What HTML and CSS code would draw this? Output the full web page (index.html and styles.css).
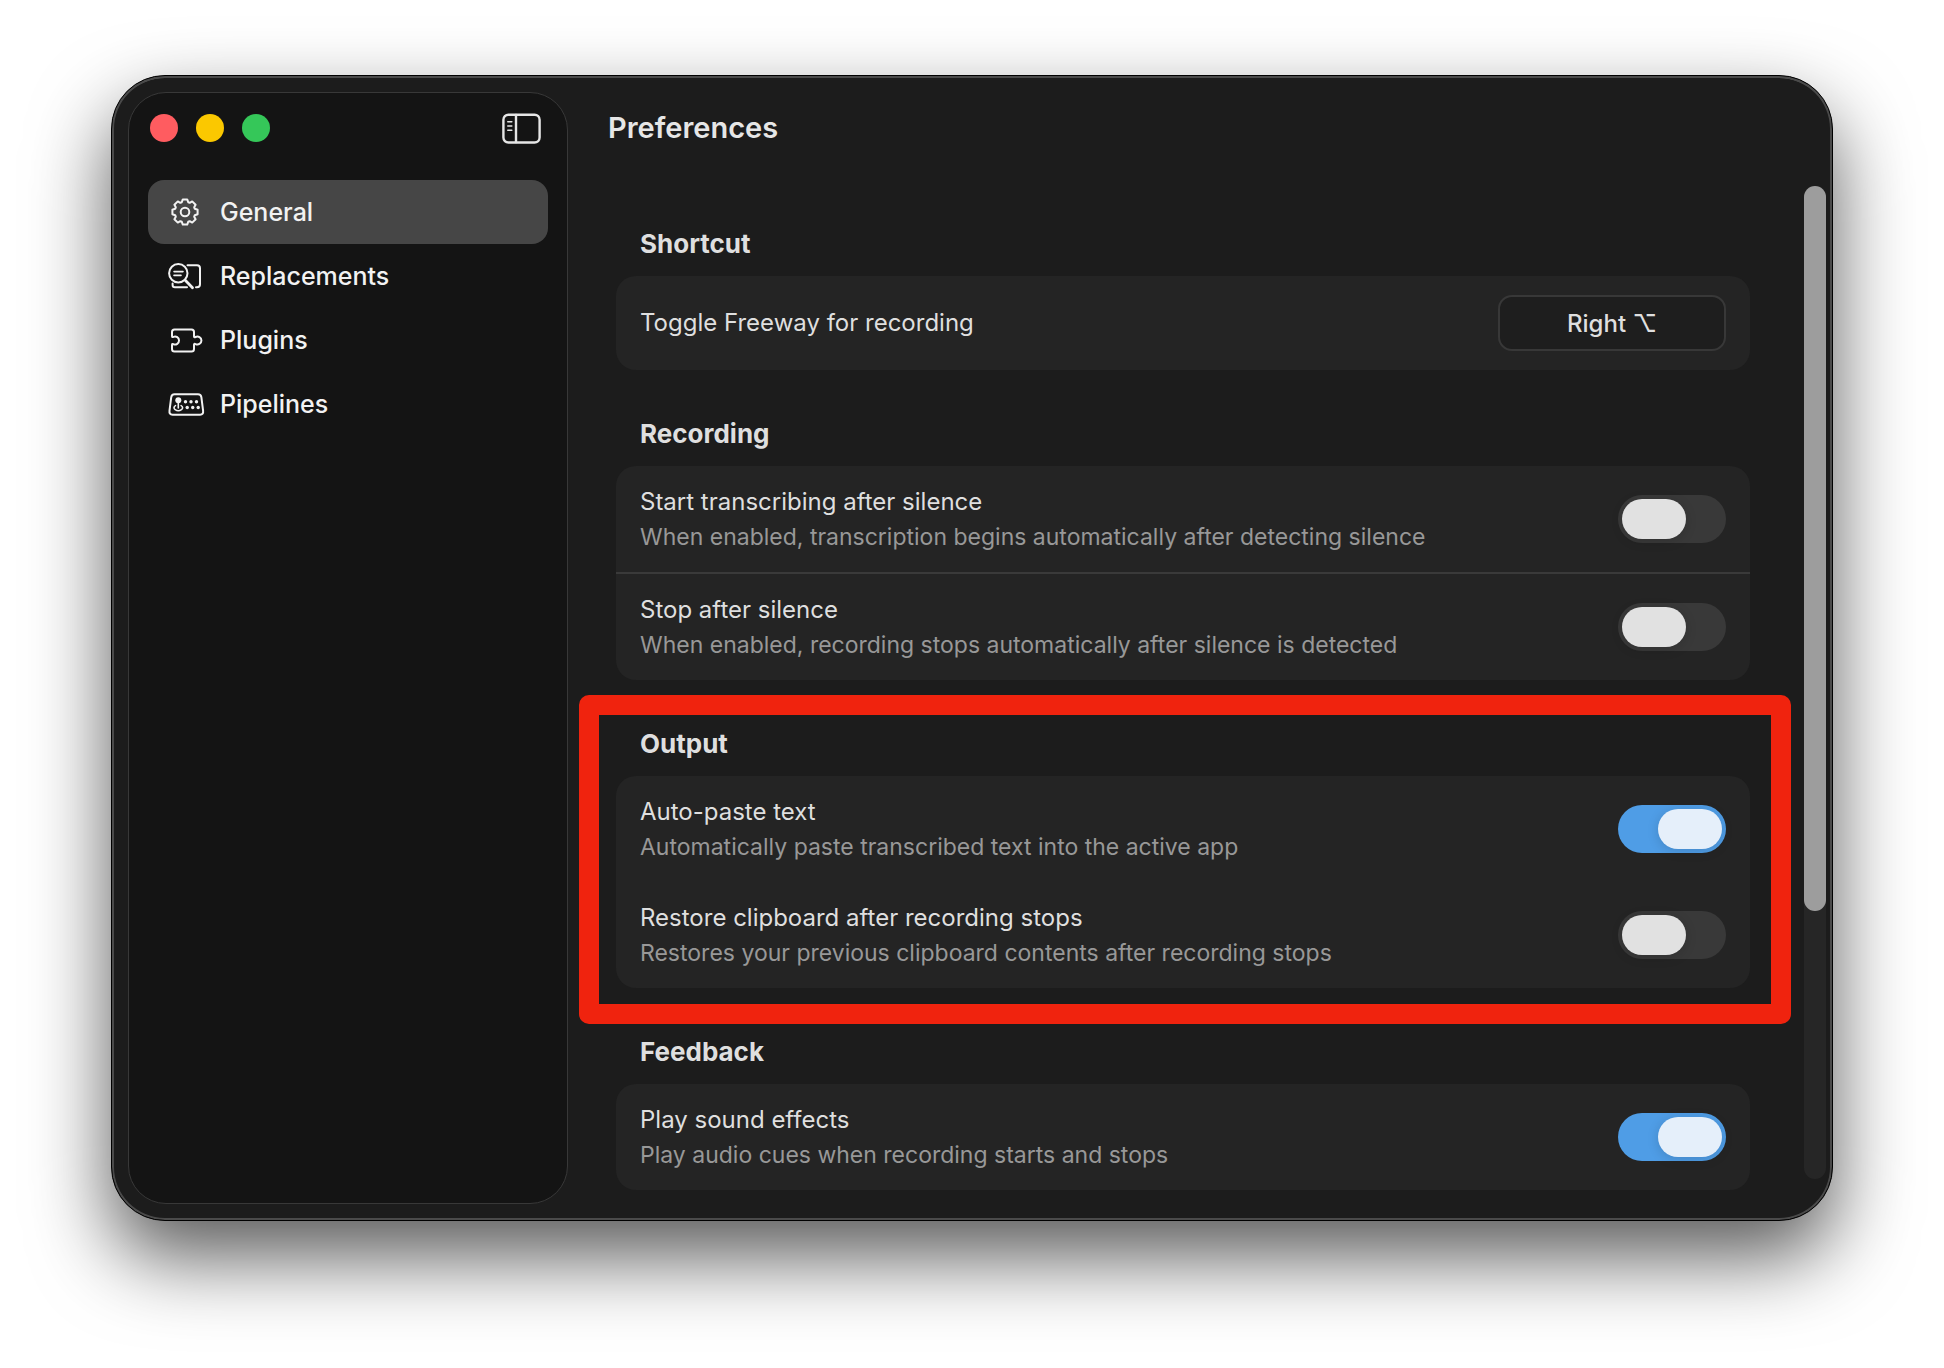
FILE: index.html
```html
<!DOCTYPE html>
<html lang="en">
<head>
    <meta charset="UTF-8">
    <meta name="viewport" content="width=device-width, initial-scale=1.0">
    <title>Preferences</title>
    <link rel="stylesheet" href="styles.css">
</head>
<body>
    <div class="window">
        <aside class="sidebar">
            <div class="sidebar-header">
                <div class="lights">
                    <button class="light close" aria-label="Close"></button>
                    <button class="light minimize" aria-label="Minimize"></button>
                    <button class="light zoom" aria-label="Zoom"></button>
                </div>
                <button class="sidebar-toggle" aria-label="Toggle sidebar">
                    <svg width="39" height="31" viewBox="0 0 39 31" fill="none" stroke="currentColor" stroke-width="2.4" stroke-linecap="round">
                        <rect x="1.4" y="1.7" width="36.2" height="27.8" rx="5"/>
                        <path d="M14 2v27"/>
                        <path d="M5.8 8.7h4M5.8 13h4M5.8 17.3h4" stroke-width="1.6"/>
                    </svg>
                </button>
            </div>
            <nav class="nav">
                <a class="nav-item active" href="#general">
                    <svg class="icon" viewBox="-20 -16 40 32">
                        <path d="M-2.2-12.6H2.2L3.2-9.8 4.7-9.2 7.2-10.6 10.6-7.2 9.2-4.7 9.8-3.2 12.6-2.2V2.2L9.8 3.2 9.2 4.7 10.6 7.2 7.2 10.6 4.7 9.2 3.2 9.8 2.2 12.6H-2.2L-3.2 9.8-4.7 9.2-7.2 10.6-10.6 7.2-9.2 4.7-9.8 3.2-12.6 2.2V-2.2L-9.8-3.2-9.2-4.7-10.6-7.2-7.2-10.6-4.7-9.2-3.2-9.8z"/>
                        <circle r="4.3"/>
                    </svg>
                    General
                </a>
                <a class="nav-item" href="#replacements">
                    <svg class="icon" viewBox="0 0 40 32">
                        <circle cx="13.3" cy="13.3" r="9.2"/>
                        <path d="M20.5 20.5l7 7.2" stroke-width="2.8"/>
                        <path d="M9 11.6h9M9 15.4h7" stroke-width="1.6"/>
                        <path d="M22.5 5.3H32q3 0 3 3v16q0 3-3 3h-1M7.6 23.5V25q0 2.3 2.3 2.3H22"/>
                    </svg>
                    Replacements
                </a>
                <a class="nav-item" href="#plugins">
                    <svg class="icon" viewBox="0 0 40 32">
                        <path d="M7 12V8q0-2.5 2.5-2.5h17Q29 5.5 29 8v4.2q0 1.6 1.5.8a4 4 0 1 1 0 7q-1.5-.8-1.5.8V25q0 2.5-2.5 2.5h-17Q7 27.5 7 25v-4q0-1.6 1.5-.8a4 4 0 1 0 0-7.4Q7 13.6 7 12z"/>
                    </svg>
                    Plugins
                </a>
                <a class="nav-item" href="#pipelines">
                    <svg class="icon" viewBox="0 0 40 32">
                        <path d="M9.5 6.3H33q3 0 3.4 3l1.7 13.4q.5 4-3 4H7.5q-3.5 0-3-4L6.2 9.3q.4-3 3.3-3z"/>
                        <path d="M10.5 17.6a4.3 2.8 0 1 0 5.6 0M13.3 13v7" stroke-width="1.6"/>
                        <g class="dots">
                            <circle cx="13.3" cy="12.3" r="3"/>
                            <circle cx="20.5" cy="13.7" r="1.7"/>
                            <circle cx="26" cy="13.7" r="1.7"/>
                            <circle cx="31.5" cy="13.7" r="1.7"/>
                            <circle cx="22.2" cy="19.5" r="1.7"/>
                            <circle cx="27.7" cy="19.5" r="1.7"/>
                            <circle cx="33.2" cy="19.5" r="1.7"/>
                        </g>
                    </svg>
                    Pipelines
                </a>
            </nav>
        </aside>

        <main class="main">
            <h1>Preferences</h1>
            <div class="body">
                <div class="content">
                    <section class="section">
                        <h2>Shortcut</h2>
                        <div class="card">
                            <div class="row shortcut-row">
                                <span class="title" id="shortcutLabel">Toggle Freeway for recording</span>
                                <button class="shortcut" aria-describedby="shortcutLabel">Right ⌥</button>
                            </div>
                        </div>
                    </section>

                    <section class="section">
                        <h2>Recording</h2>
                        <div class="card divided">
                            <div class="row">
                                <label class="text" for="startSilence">
                                    <span class="title">Start transcribing after silence</span>
                                    <span class="desc">When enabled, transcription begins automatically after detecting silence</span>
                                </label>
                                <input class="switch" type="checkbox" id="startSilence">
                            </div>
                            <div class="row">
                                <label class="text" for="stopSilence">
                                    <span class="title">Stop after silence</span>
                                    <span class="desc">When enabled, recording stops automatically after silence is detected</span>
                                </label>
                                <input class="switch" type="checkbox" id="stopSilence">
                            </div>
                        </div>
                    </section>

                    <section class="section highlighted">
                        <h2>Output</h2>
                        <div class="card">
                            <div class="row">
                                <label class="text" for="autoPaste">
                                    <span class="title">Auto-paste text</span>
                                    <span class="desc">Automatically paste transcribed text into the active app</span>
                                </label>
                                <input class="switch" type="checkbox" id="autoPaste" checked>
                            </div>
                            <div class="row">
                                <label class="text" for="restoreClipboard">
                                    <span class="title">Restore clipboard after recording stops</span>
                                    <span class="desc">Restores your previous clipboard contents after recording stops</span>
                                </label>
                                <input class="switch" type="checkbox" id="restoreClipboard">
                            </div>
                        </div>
                    </section>

                    <section class="section">
                        <h2>Feedback</h2>
                        <div class="card">
                            <div class="row">
                                <label class="text" for="playSounds">
                                    <span class="title">Play sound effects</span>
                                    <span class="desc">Play audio cues when recording starts and stops</span>
                                </label>
                                <input class="switch" type="checkbox" id="playSounds" checked>
                            </div>
                        </div>
                    </section>
                </div>
                <div class="scrollbar"><div class="thumb"></div></div>
            </div>
        </main>
    </div>
</body>
</html>
```
FILE: styles.css
```css
* {
    box-sizing: border-box;
}
body {
    margin: 0;
    min-height: 100vh;
    padding: 75px 111px 147px;
    display: flex;
    background: #fff;
    color: #dfdfdf;
    font-family: Inter, "Liberation Sans", "DejaVu Sans", sans-serif;
    font-size: 25px;
}
h1, h2 {
    margin: 0;
}
button {
    padding: 0;
    border: none;
    background: none;
    color: inherit;
    font: inherit;
}
.window {
    flex: 1;
    display: flex;
    background: #1c1c1c;
    border: 1px solid #000;
    border-radius: 54px;
    box-shadow: inset 0 0 0 2px #4a4a4a, inset 0 2px 0 #6c6c6c, 0 36px 80px rgba(0, 0, 0, 0.65);
}

/* Sidebar */
.sidebar {
    width: 440px;
    flex: none;
    margin: 16px 0 16px 16px;
    padding: 0 19px;
    background: #141414;
    border: 1px solid #383838;
    border-radius: 38px;
}
.sidebar-header {
    height: 70px;
    margin-bottom: 17px;
    padding: 0 7px 0 2px;
    display: flex;
    align-items: center;
    justify-content: space-between;
}
.lights {
    display: flex;
    gap: 18px;
}
.light {
    width: 28px;
    height: 28px;
    border-radius: 50%;
}
.close { background: #ff5c60; }
.minimize { background: #fbc800; }
.zoom { background: #35c759; }
.sidebar-toggle {
    display: flex;
    color: #e6e6e6;
}
.nav-item {
    height: 64px;
    padding-left: 17px;
    display: flex;
    align-items: center;
    gap: 15px;
    border-radius: 16px;
    color: #f2f2f2;
    text-decoration: none;
    font-weight: 500;
}
.nav-item.active {
    background: #464646;
}
.icon {
    width: 40px;
    height: 32px;
    fill: none;
    stroke: currentColor;
    stroke-width: 2;
    stroke-linecap: round;
    stroke-linejoin: round;
}
.dots {
    fill: currentColor;
    stroke: none;
}

/* Preferences pane */
.main {
    flex: 1;
    display: flex;
    flex-direction: column;
}
h1 {
    height: 104px;
    padding-left: 40px;
    line-height: 104px;
    font-size: 29px;
    font-weight: 600;
    color: #e6e6e6;
}
.body {
    flex: 1;
    display: flex;
}
.content {
    flex: 1;
    padding: 32px 54px 30px 48px;
}
.section {
    position: relative;
    margin-bottom: 32px;
}
.section:last-child {
    margin-bottom: 0;
}
h2 {
    padding-left: 24px;
    font-size: 26px;
    font-weight: 700;
    line-height: 64px;
}
.card {
    background: #242424;
    border-radius: 20px;
}
.row {
    padding: 18px 24px;
    display: flex;
    align-items: center;
    justify-content: space-between;
}
.divided .row + .row {
    border-top: 2px solid #3a3a3a;
}
.text {
    display: flex;
    flex-direction: column;
}
.title {
    font-size: 24px;
    line-height: 36px;
}
.desc {
    color: #989898;
    font-size: 23px;
    line-height: 34px;
}
.shortcut {
    width: 228px;
    height: 56px;
    background: #1e1e1e;
    border: 2px solid #383838;
    border-radius: 14px;
    font-size: 24px;
    font-weight: 500;
}
.shortcut-row {
    padding: 19px 24px;
}

.switch {
    appearance: none;
    flex: none;
    width: 108px;
    height: 48px;
    margin: 0;
    padding: 4px;
    display: flex;
    background: #393939;
    border-radius: 24px;
}
.switch::before {
    content: "";
    width: 64px;
    height: 40px;
    background: #e1e1e1;
    border-radius: 20px;
    box-shadow: 0 2px 12px rgba(0, 0, 0, 0.15);
}
.switch:checked {
    justify-content: flex-end;
    background: #4f9de6;
}
.switch:checked::before {
    background: #e5effa;
}

/* Red frame around the section being pointed out */
.highlighted::after {
    content: "";
    position: absolute;
    inset: -17px -41px -36px -37px;
    border: 20px solid #f0230e;
    border-radius: 10px;
    pointer-events: none;
}

.scrollbar {
    width: 22px;
    margin: 6px 6px 41px 0;
    background: #262626;
    border-radius: 11px;
}
.thumb {
    height: 73%;
    background: #9d9d9d;
    border-radius: 11px;
}
```
